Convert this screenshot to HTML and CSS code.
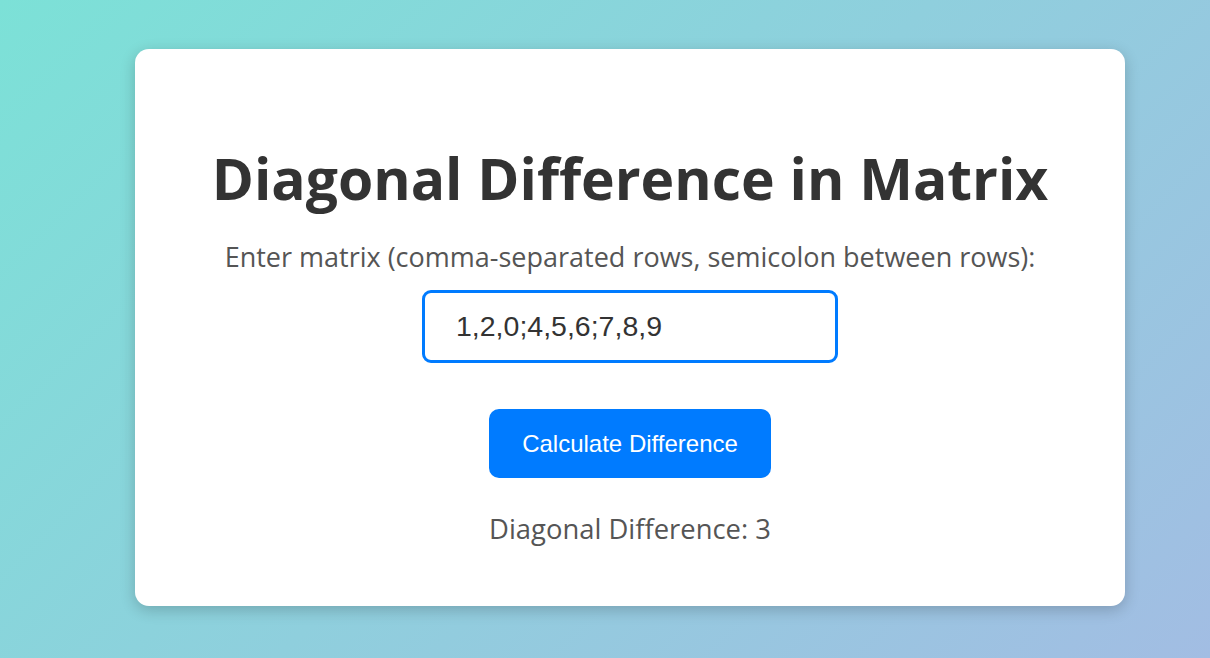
FILE: index.html
```html
<!DOCTYPE html>
<html lang="en">
<head>
<meta charset="utf-8">
<title>Diagonal Difference in Matrix</title>
<link rel="stylesheet" href="styles.css">
</head>
<body>
<main class="card">
  <h1 class="title">Diagonal Difference in Matrix</h1>
  <label class="label" for="matrix">Enter matrix (comma-separated rows, semicolon between rows):</label>
  <input class="matrix-input" id="matrix" type="text" value="1,2,0;4,5,6;7,8,9">
  <button class="calc-btn" type="button">Calculate Difference</button>
  <p class="result">Diagonal Difference: 3</p>
</main>
</body>
</html>
```
FILE: styles.css
```css
html, body {
  margin: 0;
  padding: 0;
  height: 100%;
}
body {
  background: linear-gradient(135deg, #7ce1d7 0%, #a2bde3 100%);
  display: flex;
  justify-content: center;
  align-items: flex-start;
  padding-top: 49px;
  box-sizing: border-box;
  font-family: "Open Sans", "Noto Sans", sans-serif;
}
.card {
  box-sizing: border-box;
  width: 990px;
  height: 557px;
  margin-left: 50px;
  background: #fff;
  border-radius: 14px;
  box-shadow: 0 4px 15px rgba(0, 0, 0, 0.2);
  display: flex;
  flex-direction: column;
  align-items: center;
  padding-top: 93px;
}
.title {
  margin: 0;
  font-size: 57px;
  line-height: 72px;
  font-weight: 700;
  color: #333;
}
.label {
  margin-top: 25px;
  font-size: 27px;
  line-height: 36px;
  color: #555;
}
.matrix-input {
  box-sizing: border-box;
  margin-top: 15px;
  width: 416px;
  height: 73px;
  border: 3px solid #007bff;
  border-radius: 9px;
  padding: 0 0 0 31px;
  font-family: "Liberation Sans", Arial, sans-serif;
  font-size: 28.5px;
  color: #333;
  outline: none;
}
.calc-btn {
  margin-top: 46px;
  width: 282px;
  height: 69px;
  border: none;
  border-radius: 10px;
  background: #007bff;
  color: #fff;
  font-family: "Liberation Sans", Arial, sans-serif;
  font-size: 24px;
}
.result {
  margin: 33px 0 0;
  font-size: 27.4px;
  line-height: 36px;
  color: #555;
}
```
